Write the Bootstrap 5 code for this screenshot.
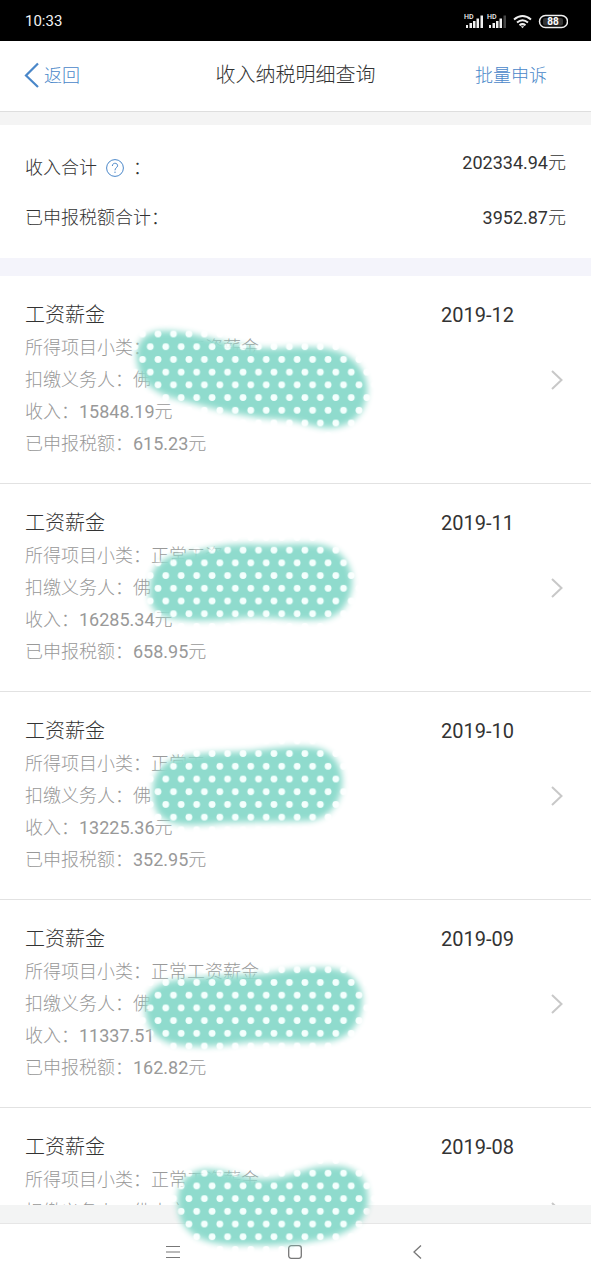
<!DOCTYPE html>
<html lang="zh-CN">
<head>
<meta charset="utf-8">
<meta name="viewport" content="width=device-width, initial-scale=1">
<title>收入纳税明细查询</title>
<link href="https://cdn.jsdelivr.net/npm/bootstrap@5.3.0/dist/css/bootstrap.min.css" rel="stylesheet">
<style>
  body { font-family: Roboto, "Noto Sans CJK SC Light", "Noto Sans CJK SC", sans-serif; font-size: 18px; color: #333; background: #fff; }
  svg { display: block; }
  .app-shell { height: 100vh; }
  .status-bar { height: 41px; background: #000; color: #f2f2f2; font-size: 15px; padding: 1px 23px 0 25px; }
  .top-bar { height: 71px; border-bottom: 1px solid #dedede; padding-bottom: 2px; }
  .top-bar a, .help-btn { color: #4a87c9; }
  .top-bar h1 { font-size: 20px; font-weight: 400; }
  .back-link { padding-left: 24px; }
  .appeal-link { padding-right: 44px; }
  .band-top { height: 13px; background: #f4f4f4; }
  .band-mid { height: 18px; background: #f4f4fb; }
  .summary { padding: 18px 25px 15px; line-height: 50px; }
  .summary dt, .summary dd { font-weight: 400; margin: 0; }
  .summary .raised { line-height: 40px; }
  .help-btn { margin: 0 9px; }
  .record { padding: 23px 28px 23px 25px; border-bottom: 1px solid #e2e2e2; gap: 35px; color: #999; line-height: 32px; }
  .record h2 { font-size: 20px; font-weight: 400; line-height: 33px; color: #333; }
  .record time { width: 75px; font-size: 20px; color: #333; }
  .record .chevron { margin-top: 71px; }
  .band-bottom { height: 18px; background: #f3f4f4; }
  .sys-nav { height: 57px; border-top: 1px solid #e6e6e6; padding: 0 19%; }
  .marker { top: 0; left: 0; pointer-events: none; }
</style>
</head>
<body>
<div class="app-shell position-relative d-flex flex-column overflow-hidden">

  <div class="status-bar d-flex justify-content-between align-items-center flex-shrink-0">
    <span>10:33</span>
    <svg width="104" height="18" viewBox="464 11 104 18" aria-hidden="true">
      <g fill="#f0f0f0">
        <g id="signal">
          <text x="464" y="18" font-size="7" font-weight="500">HD</text>
          <rect x="466" y="24" width="2" height="3"/><rect x="469.500" y="22" width="2.500" height="5"/>
          <rect x="473" y="20" width="2.500" height="7"/><rect x="476.500" y="17.500" width="2.500" height="9.500"/>
        </g>
        <rect x="480.500" y="14.500" width="2.500" height="12.500"/>
        <use href="#signal" x="23"/>
        <rect x="503.500" y="14.500" width="2.500" height="12.500" fill="#444"/>
      </g>
      <g fill="none" stroke="#f0f0f0" stroke-width="2">
        <path d="M514 18.500Q522.500 11.500 531 18.500"/>
        <path d="M517 21.500Q522.500 17 528 21.500"/>
        <path d="M519.500 24.300Q522.500 22 525.500 24.300"/>
        <rect x="539.500" y="14.500" width="28" height="12" rx="6" stroke-width="1.500"/>
      </g>
      <path d="M520.800 25.300h3.400l-1.700 2z" fill="#f0f0f0"/>
      <rect x="543" y="17" width="20" height="7.500" rx="2" fill="#333"/>
      <text x="553" y="24.200" font-size="10" font-weight="700" fill="#fff" text-anchor="middle">88</text>
    </svg>
  </div>

  <header class="top-bar d-flex align-items-center flex-shrink-0">
    <div class="col">
      <a href="#" class="back-link d-flex align-items-center text-decoration-none gap-1">
        <svg width="16" height="26" viewBox="0 0 16 26" fill="none" stroke="currentColor" stroke-width="2.200"><path d="M14 1.500L2 13.500L14 25"/></svg>返回</a>
    </div>
    <h1 class="m-0">收入纳税明细查询</h1>
    <div class="col text-end"><a href="#" class="appeal-link text-decoration-none">批量申诉</a></div>
  </header>

  <div class="band-top flex-shrink-0"></div>
  <dl class="summary flex-shrink-0 m-0">
    <div class="d-flex justify-content-between">
      <dt class="d-flex align-items-center">收入合计<button type="button" class="help-btn btn p-0 border-0" aria-label="说明">
        <svg width="18" height="18" viewBox="0 0 18 18" fill="none" stroke="currentColor"><circle cx="9" cy="9" r="8.400"/><path d="M6.300 7C6.300 3.300 11.800 3.500 11.600 6.800C11.500 8.600 9 8.800 9 11.300M9 12.600V14"/></svg></button>：</dt>
      <dd class="raised">202334.94元</dd>
    </div>
    <div class="d-flex justify-content-between">
      <dt>已申报税额合计：</dt>
      <dd>3952.87元</dd>
    </div>
  </dl>
  <div class="band-mid flex-shrink-0"></div>

  <main class="flex-grow-1 overflow-hidden">
    <article class="record d-flex align-items-start">
      <div class="flex-grow-1">
        <div class="d-flex justify-content-between"><h2 class="mb-0">工资薪金</h2><time datetime="2019-12">2019-12</time></div>
        <div>所得项目小类：正常工资薪金</div><div>扣缴义务人：佛</div><div>收入：15848.19元</div><div>已申报税额：615.23元</div>
      </div>
      <svg class="chevron" width="12" height="20" viewBox="0 0 12 20" fill="none" stroke="#c8c8c8" stroke-width="2"><path d="M1 1L10.500 10L1 19"/></svg>
    </article>
    <article class="record d-flex align-items-start">
      <div class="flex-grow-1">
        <div class="d-flex justify-content-between"><h2 class="mb-0">工资薪金</h2><time datetime="2019-11">2019-11</time></div>
        <div>所得项目小类：正常工资</div><div>扣缴义务人：佛</div><div>收入：16285.34元</div><div>已申报税额：658.95元</div>
      </div>
      <svg class="chevron" width="12" height="20" viewBox="0 0 12 20" fill="none" stroke="#c8c8c8" stroke-width="2"><path d="M1 1L10.500 10L1 19"/></svg>
    </article>
    <article class="record d-flex align-items-start">
      <div class="flex-grow-1">
        <div class="d-flex justify-content-between"><h2 class="mb-0">工资薪金</h2><time datetime="2019-10">2019-10</time></div>
        <div>所得项目小类：正常工</div><div>扣缴义务人：佛</div><div>收入：13225.36元</div><div>已申报税额：352.95元</div>
      </div>
      <svg class="chevron" width="12" height="20" viewBox="0 0 12 20" fill="none" stroke="#c8c8c8" stroke-width="2"><path d="M1 1L10.500 10L1 19"/></svg>
    </article>
    <article class="record d-flex align-items-start">
      <div class="flex-grow-1">
        <div class="d-flex justify-content-between"><h2 class="mb-0">工资薪金</h2><time datetime="2019-09">2019-09</time></div>
        <div>所得项目小类：正常工资薪金</div><div>扣缴义务人：佛</div><div>收入：11337.51</div><div>已申报税额：162.82元</div>
      </div>
      <svg class="chevron" width="12" height="20" viewBox="0 0 12 20" fill="none" stroke="#c8c8c8" stroke-width="2"><path d="M1 1L10.500 10L1 19"/></svg>
    </article>
    <article class="record d-flex align-items-start">
      <div class="flex-grow-1">
        <div class="d-flex justify-content-between"><h2 class="mb-0">工资薪金</h2><time datetime="2019-08">2019-08</time></div>
        <div>所得项目小类：正常工资薪金</div><div>扣缴义务人：佛山市</div>
      </div>
      <svg class="chevron" width="12" height="20" viewBox="0 0 12 20" fill="none" stroke="#c8c8c8" stroke-width="2"><path d="M1 1L10.500 10L1 19"/></svg>
    </article>
  </main>

  <div class="band-bottom flex-shrink-0"></div>
  <nav class="sys-nav d-flex align-items-center flex-shrink-0">
    <button type="button" class="col btn p-0 border-0 d-flex justify-content-center" aria-label="菜单">
      <svg width="14" height="14" viewBox="0 0 14 14" fill="none" stroke="#777" stroke-width="1.200"><path d="M0 1.500H14M0 7H14M0 12.500H14"/></svg></button>
    <button type="button" class="col btn p-0 border-0 d-flex justify-content-center" aria-label="主页">
      <svg width="14" height="14" viewBox="0 0 14 14" fill="none" stroke="#777" stroke-width="1.300"><rect x=".7" y=".7" width="12.600" height="12.600" rx="2.500"/></svg></button>
    <button type="button" class="col btn p-0 border-0 d-flex justify-content-center" aria-label="返回">
      <svg width="9" height="14" viewBox="0 0 9 14" fill="none" stroke="#777" stroke-width="1.300"><path d="M8 .5L1 7L8 13.500"/></svg></button>
  </nav>

  <!-- polka-dot brush strokes hiding private details -->
  <svg class="marker position-absolute" width="400" height="1280" viewBox="0 0 400 1280" aria-hidden="true">
    <defs>
      <pattern id="dots" patternUnits="userSpaceOnUse" x="154.150" y="327.650" width="15.460" height="25.430">
        <rect width="15.460" height="25.430" fill="#8fdbcd"/>
        <g fill="#f3fffd"><circle cx="3.860" cy="6.360" r="3.400"/><circle cx="11.590" cy="19.070" r="3.400"/></g>
      </pattern>
      <filter id="soft" filterUnits="userSpaceOnUse" x="0" y="0" width="400" height="1280"><feGaussianBlur stdDeviation="3"/></filter>
      <mask id="strokes" maskUnits="userSpaceOnUse" x="0" y="0" width="400" height="1280">
        <g filter="url(#soft)" fill="#fff">
          <path d="M137 362C134 345 143 331 162 331C190 329 225 346 264 348C290 349 312 344 333 350C360 356 370 380 367 395C364 417 348 428 328 428C308 427 303 420 275 419C238 417 205 406 180 400C158 395 140 384 137 362Z"/>
          <path d="M150 589C150 565 164 555 187 553C206 549 220 544 250 544C280 546 300 542 322 545C343 549 354 568 352 586C349 609 335 620 315 620C290 621 270 616 242 618C220 621 194 622 175 619C155 616 147 605 150 589Z"/>
          <path d="M153 792C152 770 167 757 191 755C215 751 235 753 258 750C279 748 300 744 321 749C338 755 344 773 342 787C339 807 326 820 307 821C278 822 250 822 223 823C202 825 180 827 168 821C156 816 153 805 153 792Z"/>
          <path d="M145 1009C143 991 160 980 185 979C215 975 244 976 270 973C291 969 315 966 336 969C356 974 365 990 362 1006C360 1027 346 1041 323 1042C293 1043 268 1040 241 1043C218 1047 187 1048 169 1043C153 1037 146 1025 145 1009Z"/>
          <path d="M178 1207C175 1186 186 1171 205 1169C228 1168 242 1180 266 1179C293 1178 307 1165 333 1166C354 1165 368 1178 368 1196C370 1218 353 1232 329 1238C301 1244 276 1246 249 1245C221 1246 199 1242 188 1230C180 1222 179 1215 178 1207Z"/>
        </g>
      </mask>
    </defs>
    <rect width="400" height="1280" fill="url(#dots)" mask="url(#strokes)"/>
  </svg>
</div>
<script src="https://cdn.jsdelivr.net/npm/bootstrap@5.3.0/dist/js/bootstrap.bundle.min.js"></script>
</body>
</html>
